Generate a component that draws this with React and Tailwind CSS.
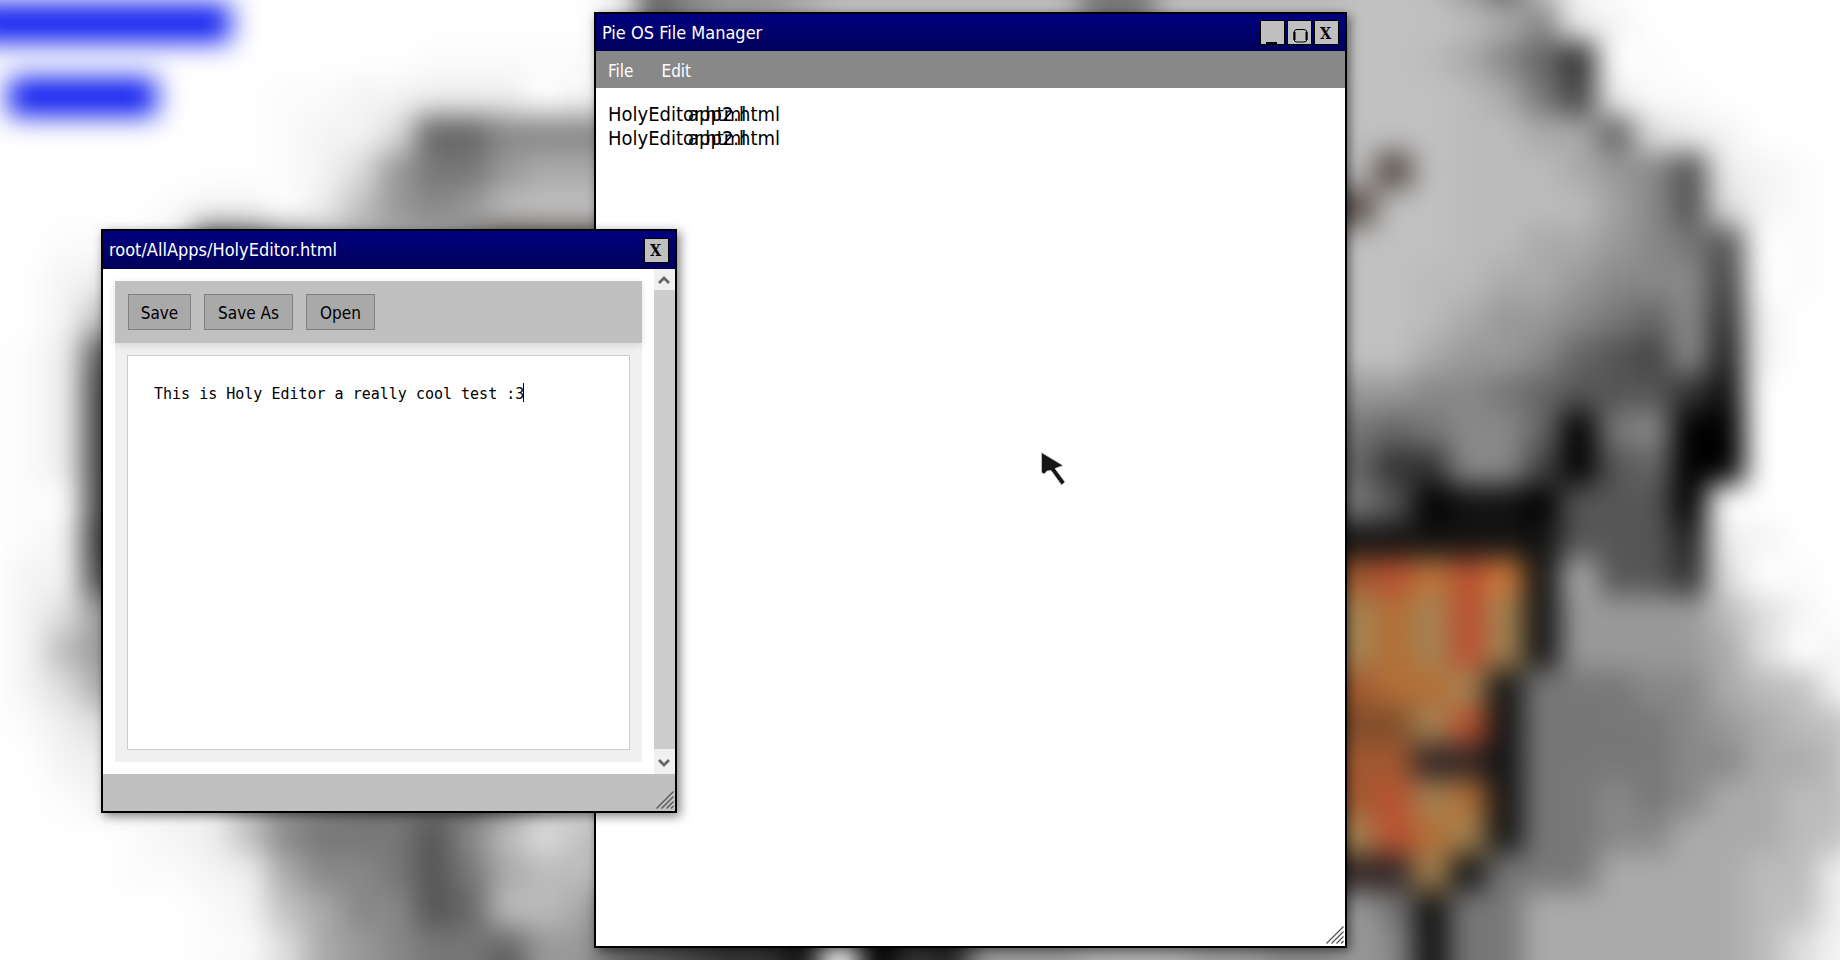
import React from "react";

// Pixel-art wallpaper: one character per cell. Hex digits are grey levels,
// the other letters are looked up here and "." is left white.
const COLORS = {
  c: "#c1c1c1", g: "#fbfbfb", h: "#f4f4f4", U: "#0010ee", K: "#121212", M: "#a0a0a0", N: "#544a44",
  D: "#302424", O: "#b26e36", R: "#b9502f", S: "#bd773a", T: "#a48352", P: "#cf7b3a", B: "#804c2a", Q: "#a15830",
};

// Columns 0-16.
const WEST = [
  ".................",
  "UUUUUUU..........",
  "............ggggg",
  ".UUUU...gghheeefh",
  "........ghhd66888",
  "........ghd9779aa",
  ".....ghhfec989bcc",
  "..ggge458aaaa8NNN",
  "..he5688888888888",
  "..hc5688888888888",
  ".ge55688888888888",
  ".ge44688888888888",
  ".ge44688888888888",
  ".ge44688888888888",
  ".gf44688888888888",
  ".gh33688888888888",
  ".hh44688888888888",
  ".hd99988888888888",
  ".hb99988888888888",
  ".hdaaa88888888888",
  ".gedddcc888888888",
  "..heeeeec88888888",
  "..ghhhhc9877768bd",
  "....ghec877758bdc",
  "....gghea88757abb",
  "......ghca8856bba",
  "......ggda9877699",
  "......ghda9877599",
];

// Columns 37-50.
const EAST = [
  "ccb96ch.......",
  "cccba8eh......",
  "ccba863fg.....",
  "cccba74egg....",
  "cccbbaa6deh...",
  "bNcbbba985ehg.",
  "NccbbbbM85dhg.",
  "cccbbaa9875fg.",
  "ccbbaa98884fg.",
  "ccba9987683h..",
  "cca99865482h..",
  "99887655531...",
  "76788607800...",
  "63388405600...",
  "7501105550f...",
  "KK1KK15552eh..",
  "QRSRPKa553dfg.",
  "TOTRTK9999bdh.",
  "TOTRTK9999adfh",
  "QOOTK77788abch",
  "BBTRK777789abc",
  "QQDDK777788aab",
  "QRTOK77878aabb",
  "TROTK7788aaabc",
  "DDTK777aaaabbe",
  "97177aaaaaabce",
  "98177aaaaaabdh",
  "98177aaaaaabdh",
];

// Columns 17-36, seen only along the top and bottom edges.
const TOP = "e6899abbbbbbb77bbbbb";
const BOTTOM = "654331e032999aaa9988";

const CELL = 36.95;
const ORIGIN_X = -28.5;
const ORIGIN_Y = -32.7;

function Cells({ row, line, start }) {
  return row.split("").map((ch, i) =>
    ch === "." ? null : (
      <rect
        key={i}
        x={ORIGIN_X + (start + i) * CELL}
        y={ORIGIN_Y + line * CELL}
        width={CELL + 0.3}
        height={CELL + 0.3}
        fill={COLORS[ch] || `#${ch}${ch}${ch}`}
      />
    )
  );
}

function Wallpaper() {
  return (
    <svg className="absolute inset-0 size-full" viewBox="0 0 1840 960" preserveAspectRatio="xMidYMid slice" aria-hidden="true">
      <defs>
        <filter id="soft" x="-60" y="-60" width="1960" height="1080" filterUnits="userSpaceOnUse" colorInterpolationFilters="sRGB">
          <feGaussianBlur stdDeviation="14" />
        </filter>
      </defs>
      <g filter="url(#soft)">
        <rect x="-60" y="-60" width="1960" height="1080" fill="#fff" />
        {WEST.map((row, i) => <Cells key={i} row={row + row[16]} line={i} start={0} />)}
        {EAST.map((row, i) => <Cells key={i} row={row[0] + row} line={i} start={36} />)}
        {[0, 1, 2].map((line) => <Cells key={line} row={TOP} line={line} start={17} />)}
        {[25, 26, 27].map((line) => <Cells key={line} row={BOTTOM} line={line} start={17} />)}
      </g>
    </svg>
  );
}

function ControlButton({ label, children }) {
  return (
    <button
      aria-label={label}
      className="flex size-[25px] items-center justify-center border border-black bg-[#c0c0c0] pr-0.5 pt-0.5 font-['DejaVu_Serif_Condensed','DejaVu_Serif',serif] text-base font-bold leading-none text-black"
    >
      {children}
    </button>
  );
}

function TitleBar({ title, children }) {
  return (
    <header className="flex flex-1 items-center justify-between bg-linear-to-b from-[#000080] to-[#00005a] px-1.5 text-white">
      <h1 className="text-[18px] leading-6">{title}</h1>
      <div className="flex gap-0.5">{children}</div>
    </header>
  );
}

function ResizeGrip() {
  return (
    <svg className="absolute bottom-0.5 right-px" width="18" height="18" viewBox="0 0 18 18" stroke="#555" strokeWidth="1.3" aria-hidden="true">
      <path d="M0.5 17.5 17.5 0.5M5.5 17.5 17.5 5.5M10.5 17.5 17.5 10.5M15 17.5 17.5 15" />
    </svg>
  );
}

const WINDOW = "absolute flex flex-col border-2 border-black bg-white shadow-[3px_3px_10px_rgba(0,0,0,0.5)]";

function FileManager() {
  const files = [["HolyEditor.html", "app2.html"], ["HolyEditor.html", "app2.html"]];
  return (
    <section className={`${WINDOW} left-[594px] top-3 h-[936px] w-[753px]`}>
      <div className="flex h-[37px] shrink-0">
        <TitleBar title="Pie OS File Manager">
          <ControlButton label="Minimize"><span className="mt-[18px] h-0.5 w-[11px] bg-black" /></ControlButton>
          <ControlButton label="Maximize">
            <svg className="ml-1 mt-1" width="15" height="14" viewBox="0 0 15 14" fill="none" stroke="#000" aria-hidden="true">
              <rect x="1" y="0.5" width="13" height="12.5" rx="3" />
              <path d="M1.5 3v8M13.5 3v8" strokeWidth="2" />
            </svg>
          </ControlButton>
          <ControlButton label="Close">X</ControlButton>
        </TitleBar>
      </div>
      <nav className="flex h-[37px] shrink-0 items-center gap-7 bg-[#888] px-3 pt-0.5 text-[17px] leading-6 text-white">
        <button>File</button>
        <button>Edit</button>
      </nav>
      <ul className="p-3 pt-3.5 text-[20px] leading-6 text-black">
        {files.map(([name, source], i) => (
          <li key={i} className="grid grid-cols-[80px_80px] whitespace-nowrap">
            <span>{name}</span>
            <span>{source}</span>
          </li>
        ))}
      </ul>
      <ResizeGrip />
    </section>
  );
}

function Chevron({ path }) {
  return (
    <svg width="12" height="9" viewBox="0 0 12 9" fill="none" stroke="#666" strokeWidth="2.8" aria-hidden="true">
      <path d={path} />
    </svg>
  );
}

function Editor() {
  return (
    <section className={`${WINDOW} left-[101px] top-[229px] h-[584px] w-[576px]`}>
      <div className="flex h-[38px] shrink-0">
        <TitleBar title="root/AllApps/HolyEditor.html">
          <ControlButton label="Close">X</ControlButton>
        </TitleBar>
      </div>
      <div className="flex min-h-0 flex-1">
        <div className="flex min-w-0 flex-1 flex-col p-3">
          <div className="z-10 flex shrink-0 gap-[13px] bg-[#c0c0c0] p-[13px] text-[17px] leading-6 text-black shadow-[0_2px_8px_rgba(0,0,0,0.12)]">
            <button className="w-[63px] border border-[#808080] bg-[#a9a9a9] pb-1 pt-1.5">Save</button>
            <button className="w-[89px] border border-[#808080] bg-[#a9a9a9] pb-1 pt-1.5">Save As</button>
            <button className="w-[69px] border border-[#808080] bg-[#a9a9a9] pb-1 pt-1.5">Open</button>
          </div>
          <div className="relative flex flex-1 bg-[#f0f0f0] p-3">
            <textarea
              aria-label="Document"
              className="flex-1 resize-none border border-[#ccc] bg-white px-[26px] pt-7 font-['DejaVu_Sans_Mono',monospace] text-[15px] leading-5 text-black outline-none"
              defaultValue="This is Holy Editor a really cool test :3"
            />
            <span className="absolute left-[408px] top-10 h-[19px] w-px bg-black" />
          </div>
        </div>
        <div className="flex w-[21px] flex-col bg-[#f0f0f0]">
          <button aria-label="Scroll up" className="flex h-[21px] items-center justify-center pr-px"><Chevron path="M1 8 6 3l5 5" /></button>
          <div className="flex-1 bg-[#cdcdcd]" />
          <button aria-label="Scroll down" className="flex h-[25px] items-center justify-center pr-px pt-1"><Chevron path="M1 1l5 5 5-5" /></button>
        </div>
      </div>
      <footer className="h-[37px] shrink-0 bg-[#c0c0c0]" />
      <ResizeGrip />
    </section>
  );
}

export default function App() {
  return (
    <main className="relative h-screen overflow-hidden bg-white font-['DejaVu_Sans_Condensed','DejaVu_Sans',sans-serif]">
      <Wallpaper />
      <FileManager />
      <Editor />
      <svg className="absolute left-[1040px] top-[451px]" width="28" height="36" viewBox="0 0 28 36" aria-hidden="true">
        <path d="M1.5 1.5 23 14.5 15 17.5 25 31 21.5 34 11 19.5 7 20 4.5 23 1.5 21.5Z" fill="#161616" stroke="#ccc" strokeWidth="0.8" />
      </svg>
    </main>
  );
}
